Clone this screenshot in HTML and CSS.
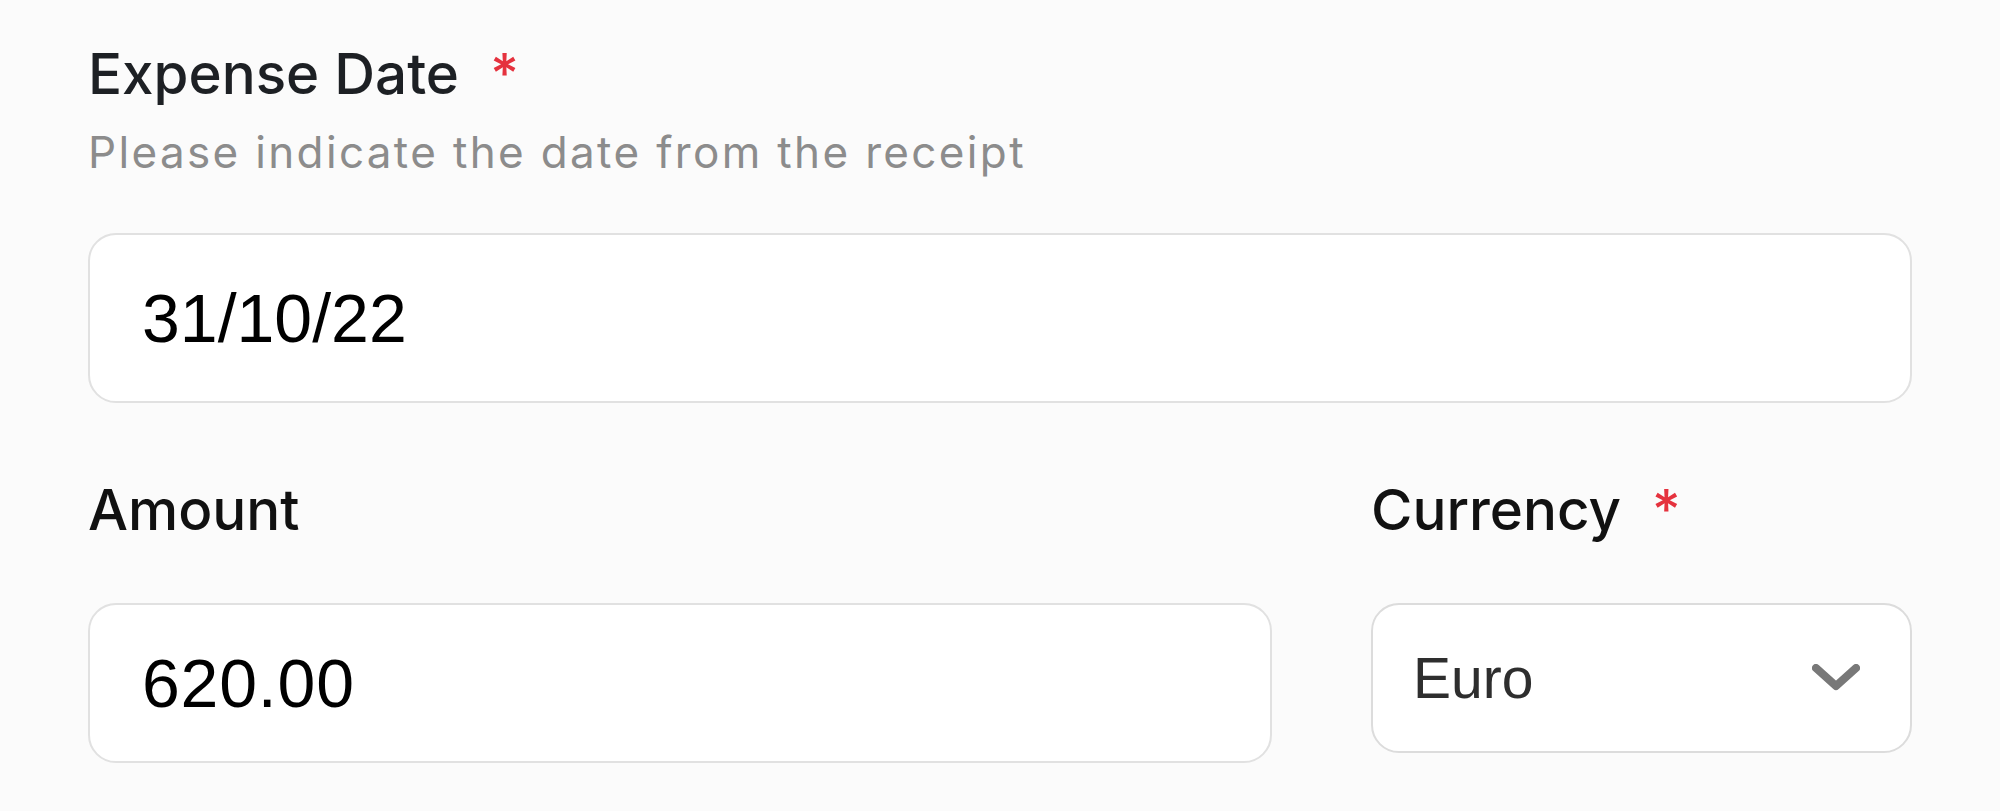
FILE: index.html
```html
<!DOCTYPE html>
<html>
<head>
  <meta charset="UTF-8">
  <title>Expense</title>
  <link rel="stylesheet" href="styles.css">
</head>
<body>
  <form class="expense-form">
    <div class="field">
      <label class="label" for="date">Expense Date <span class="req">*</span></label>
      <p class="hint">Please indicate the date from the receipt</p>
      <input class="input input-date" type="text" id="date" value="31/10/22">
    </div>

    <div class="row">
      <div class="field">
        <label class="label label-dark" for="amount">Amount</label>
        <input class="input input-amount" type="text" id="amount" value="620.00">
      </div>
      <div class="field">
        <label class="label label-dark">Currency <span class="req">*</span></label>
        <div class="select">
          <span class="select-value">Euro</span>
          <svg class="chevron" width="48" height="28" viewBox="0 0 48 28">
            <polyline points="4,4 24,22 44,4" fill="none" stroke="#787878" stroke-width="8" stroke-linecap="round" stroke-linejoin="round"/>
          </svg>
        </div>
      </div>
    </div>
  </form>
</body>
</html>
```

FILE: styles.css
```css
* { box-sizing: border-box; }
body {
  margin: 0;
  background: #fbfbfb;
  font-family: Inter, "Noto Sans", sans-serif;
}
.expense-form {
  padding: 41px 88px 0;
  width: 2000px;
}
.field {
  display: flex;
  flex-direction: column;
}
/* Labels */
.label {
  font-size: 56.5px;
  font-weight: 500;
  line-height: 66px;
  color: #1d2024;
}
.label-dark { color: #111; }
.req {
  color: #e5323e;
  font-size: 55px;
  margin-left: 16px;
  vertical-align: top;
  line-height: 64px;
}
.hint {
  margin: 19px 0 0;
  font-size: 44px;
  line-height: 53px;
  letter-spacing: 2.35px;
  color: #8c8c8c;
}
/* Inputs */
.input {
  width: 100%;
  border: 2px solid #e1e1e1;
  border-radius: 28px;
  background: #fff;
  padding: 0 52px;
  font-family: "Liberation Sans", Arial, sans-serif;
  font-size: 68px;
  color: #000;
  outline: none;
}
.input-date {
  height: 170px;
  margin-top: 54px;
}
.row {
  display: grid;
  grid-template-columns: 1184px 541px;
  column-gap: 99px;
  margin-top: 74px;
}
.input-amount {
  height: 160px;
  margin-top: 60px;
  letter-spacing: 0.8px;
}
.select {
  height: 150px;
  margin-top: 60px;
  border: 2px solid #dcdcdc;
  border-radius: 28px;
  background: #fff;
  padding: 0 50px 0 40px;
  display: flex;
  align-items: center;
  justify-content: space-between;
}
.select-value {
  font-family: "Liberation Sans", Arial, sans-serif;
  font-size: 57px;
  color: #2e2e2e;
}
.chevron { display: block; }
```
